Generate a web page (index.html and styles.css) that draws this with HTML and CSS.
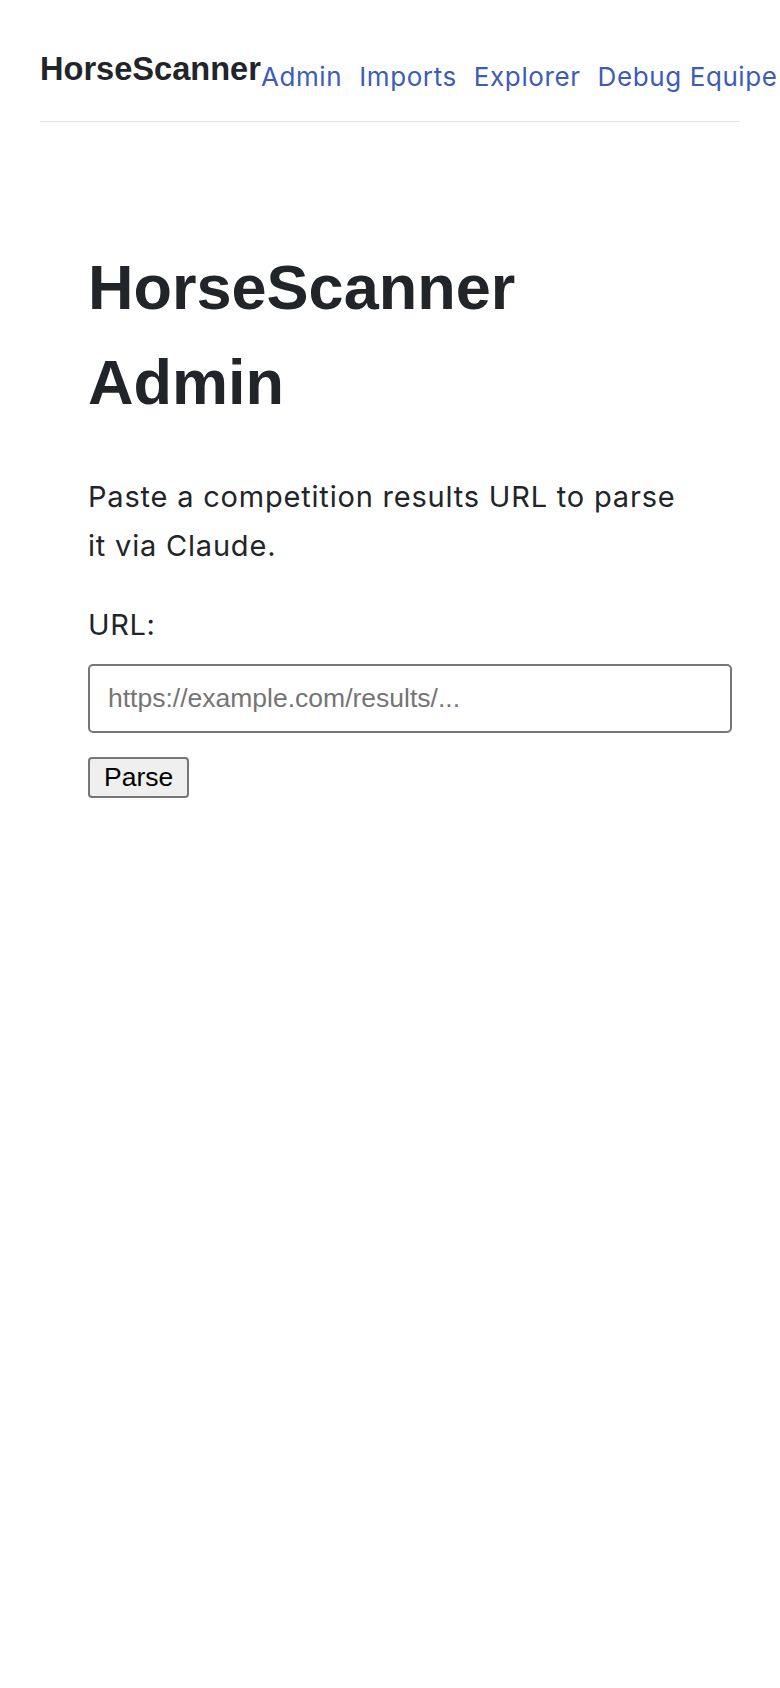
FILE: index.html
```
<!DOCTYPE html>
<html lang="en">
<head>
<meta charset="utf-8">
<title>HorseScanner Admin</title>
<link rel="stylesheet" href="styles.css">
</head>
<body>
<header class="site-header">
  <div class="header-row">
    <a class="brand" href="#">HorseScanner</a>
    <nav class="nav">
      <a href="#">Admin</a>
      <a href="#">Imports</a>
      <a href="#">Explorer</a>
      <a href="#">Debug Equipe</a>
    </nav>
  </div>
</header>
<main class="main">
  <h1 class="title">HorseScanner Admin</h1>
  <p class="intro">Paste a competition results URL to parse it via Claude.</p>
  <form class="parse-form">
    <label class="label" for="url">URL:</label>
    <input class="url-input" id="url" type="text" placeholder="https://example.com/results/...">
    <button class="btn" type="button">Parse</button>
  </form>
</main>
</body>
</html>
```
FILE: styles.css
```
html {
  overflow-x: hidden;
}
body {
  margin: 0;
  background: #fff;
  color: #212529;
  font-family: Inter, "Noto Sans", sans-serif;
  overflow-x: hidden;
}
.site-header {
  padding: 49px 40px 0 40px;
}
.header-row {
  display: flex;
  align-items: flex-start;
  width: 700px;
  padding-bottom: 29px;
  border-bottom: 1px solid #e6e6e6;
}
.brand {
  flex-shrink: 0;
  font-family: "Liberation Sans", Arial, sans-serif;
  font-weight: 700;
  font-size: 32.6px;
  line-height: 1.2;
  color: #212529;
  text-decoration: none;
}
.nav {
  flex-shrink: 0;
  display: flex;
  gap: 17px;
  margin-top: 12px;
  white-space: nowrap;
}
.nav a {
  font-size: 26px;
  line-height: 1.2;
  letter-spacing: 0.6px;
  color: #3d5cb8;
  text-decoration: none;
}
.main {
  padding: 0 48px 0 88px;
}
.title {
  margin: 118px 0 0 0;
  max-width: 600px;
  font-family: "Liberation Sans", Arial, sans-serif;
  font-weight: 700;
  font-size: 63px;
  line-height: 95px;
  color: #212529;
}
.intro {
  margin: 42px 0 0 0;
  max-width: 600px;
  font-size: 29px;
  line-height: 49px;
  letter-spacing: 0.8px;
}
.parse-form {
  display: flex;
  flex-direction: column;
  align-items: flex-start;
  margin-top: 30px;
}
.label {
  font-size: 29px;
  line-height: 49px;
  letter-spacing: 0.6px;
}
.url-input {
  box-sizing: border-box;
  width: 100%;
  height: 69px;
  margin-top: 15px;
  padding: 0 18px;
  border: 2px solid #767676;
  border-radius: 5px;
  font-family: "Liberation Sans", Arial, sans-serif;
  font-size: 26.5px;
  color: #212529;
}
.url-input::placeholder {
  color: #757575;
}
.btn {
  margin-top: 24px;
  height: 41px;
  padding: 0 14px;
  background: #efefef;
  border: 2px solid #767676;
  border-radius: 4px;
  font-family: "Liberation Sans", Arial, sans-serif;
  font-size: 26.5px;
  line-height: 1.15;
  color: #000;
}
```
